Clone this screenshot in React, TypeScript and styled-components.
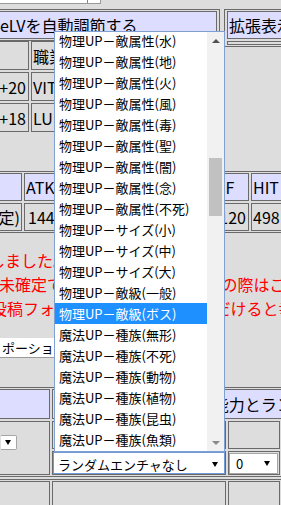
import styled, { createGlobalStyle } from "styled-components";

const HEAD = "#ddddff";
const BODY = "#dddddd";
const LINE = "#6a6a6a";

const GlobalStyle = createGlobalStyle`
  html, body {
    margin: 0;
    padding: 0;
    background: ${BODY};
  }
  body {
    font-family: "Noto Sans CJK JP", "Noto Sans", sans-serif;
    font-size: 16px;
    color: #000;
  }
`;

const OPTIONS = [
  "物理UP－敵属性(水)",
  "物理UP－敵属性(地)",
  "物理UP－敵属性(火)",
  "物理UP－敵属性(風)",
  "物理UP－敵属性(毒)",
  "物理UP－敵属性(聖)",
  "物理UP－敵属性(闇)",
  "物理UP－敵属性(念)",
  "物理UP－敵属性(不死)",
  "物理UP－サイズ(小)",
  "物理UP－サイズ(中)",
  "物理UP－サイズ(大)",
  "物理UP－敵級(一般)",
  "物理UP－敵級(ボス)",
  "魔法UP－種族(無形)",
  "魔法UP－種族(不死)",
  "魔法UP－種族(動物)",
  "魔法UP－種族(植物)",
  "魔法UP－種族(昆虫)",
  "魔法UP－種族(魚類)",
];
const SELECTED = "物理UP－敵級(ボス)";

// scroll state of the open list
const ITEM_H = 21;
const TOTAL_ITEMS = 134;
const VIEW_H = 419;
const SCROLL_TOP = 800;
const TRACK_H = VIEW_H - 34;

const App = () => {
  const full = TOTAL_ITEMS * ITEM_H;
  const thumbH = (VIEW_H / full) * TRACK_H;
  const thumbTop = (SCROLL_TOP / full) * TRACK_H;

  return (
    <Page>
      <GlobalStyle />
      <TopInput>
        <Caret />
      </TopInput>

      <Band>
        <LeftStack>
          <Frame $flush $cols="217px" $rows="28px">
            <Cell $head $edge $pad={0}>eLVを自動調節する</Cell>
          </Frame>
          <StatGrid>
            <Cell $edge />
            <Cell>職業</Cell>
            <Cell $edge $end $pad={2}>+20</Cell>
            <Cell>VIT</Cell>
            <Cell $edge $end $pad={2}>+18</Cell>
            <Cell>LUK</Cell>
          </StatGrid>
        </LeftStack>
        <Frame $cols="120px" $rows="28px 4px">
          <Cell $head>拡張表示</Cell>
          <Cell />
        </Frame>
      </Band>

      <Frame $flush $cols="22px 60px 56px 57px 46px 60px" $rows="28px 28px" style={{ marginTop: 39 }}>
        <Cell $head $edge />
        <Cell $head>ATK</Cell>
        <Cell $head>MATK</Cell>
        <Cell $head>MDEF</Cell>
        <Cell $head>DEF</Cell>
        <Cell $head>HIT</Cell>
        <Cell $edge $end $pad={1}>(固定)</Cell>
        <Cell $pad={3}>144</Cell>
        <Cell>150</Cell>
        <Cell>32</Cell>
        <Cell $end $pad={2}>120</Cell>
        <Cell>498</Cell>
      </Frame>

      <Notice>
        <RedLine $indent={-11}>しました。</RedLine>
        <RedLine $indent={-1}>未確定です。バグの報告や要望の際はご連絡ください。</RedLine>
        <RedLine $indent={-9}>投稿フォームから、ご連絡いただけると幸いです。</RedLine>
      </Notice>

      <Potion>ポーション</Potion>

      <EnchantFrame $flush $cols="50px 174px 52px 60px" $rows="30px 28px 24px">
        <Cell $head $edge />
        <Cell $head $pad={0} $span>スロットエンチャント能力とランダムオプション</Cell>
        <SideCell $edge>
          <MiniSelect>
            <Arrow />
          </MiniSelect>
        </SideCell>
        <Cell />
        <Cell />
        <Cell />
        <Cell $pad={0}>
          <EnchantSelect>
            <span>ランダムエンチャなし</span>
            <Arrow />
          </EnchantSelect>
        </Cell>
        <Cell $pad={0}>
          <CountSelect>
            <span>0</span>
            <Arrow />
          </CountSelect>
        </Cell>
        <Cell />
      </EnchantFrame>

      <Frame $flush $cols="50px 174px 52px 60px" $rows="30px" style={{ marginTop: 2 }}>
        <Cell $edge />
        <Cell />
        <Cell />
        <Cell />
      </Frame>

      <Popup>
        <OptionList>
          <div style={{ marginTop: -(SCROLL_TOP % ITEM_H) }}>
            {OPTIONS.map((o) => (
              <Option key={o} $selected={o === SELECTED}>
                {o}
              </Option>
            ))}
          </div>
        </OptionList>
        <Scrollbar>
          <ScrollButton>
            <StepArrow $up />
          </ScrollButton>
          <Track>
            <Thumb style={{ marginTop: thumbTop, height: thumbH }} />
          </Track>
          <ScrollButton>
            <StepArrow />
          </ScrollButton>
        </Scrollbar>
      </Popup>
    </Page>
  );
};

const Page = styled.div`
  position: relative;
  width: 281px;
  height: 505px;
  overflow: hidden;
`;

const TopInput = styled.div`
  box-sizing: border-box;
  width: 101px;
  height: 4px;
  padding-left: 87px;
  background: #fff;
  border-right: 1px solid #9a9a9a;
  border-bottom: 1px solid #9a9a9a;
`;

const Caret = styled.span`
  display: block;
  width: 1px;
  height: 3px;
  background: #e06060;
`;

const Band = styled.div`
  display: flex;
  align-items: flex-start;
  gap: 4px;
  width: max-content;
  margin-top: 5px;
`;

const LeftStack = styled.div`
  display: flex;
  flex-direction: column;
`;

const Frame = styled.div<{ $cols: string; $rows: string; $flush?: boolean }>`
  display: grid;
  width: max-content;
  grid-template-columns: ${(p) => p.$cols};
  grid-template-rows: ${(p) => p.$rows};
  gap: 2px;
  border: 1px solid ${LINE};
  border-left-width: ${(p) => (p.$flush ? 0 : 1)}px;
  padding: 1px 2px 1px ${(p) => (p.$flush ? 0 : 2)}px;
`;

const EnchantFrame = styled(Frame)`
  margin-top: 29px;
`;

const StatGrid = styled.div`
  display: grid;
  grid-template-columns: 29px 100px;
  grid-auto-rows: 29px;
  gap: 2px;
`;

const Cell = styled.div<{ $head?: boolean; $edge?: boolean; $end?: boolean; $pad?: number; $span?: boolean }>`
  box-sizing: border-box;
  min-width: 0;
  display: flex;
  align-items: center;
  justify-content: ${(p) => (p.$end ? "flex-end" : "flex-start")};
  overflow: hidden;
  white-space: nowrap;
  padding: 0 ${(p) => p.$pad ?? 1}px;
  border: 1px solid ${LINE};
  border-left-width: ${(p) => (p.$edge ? 0 : 1)}px;
  background: ${(p) => (p.$head ? HEAD : BODY)};
  line-height: 1;
  grid-column: ${(p) => (p.$span ? "2 / -1" : "auto")};
`;

const SideCell = styled(Cell)`
  grid-row: span 2;
  align-items: flex-start;
  padding-top: 13px;
`;

const Notice = styled.div`
  margin-top: 15px;
  color: #ff0000;
  font-size: 16px;
  line-height: 24px;
`;

const RedLine = styled.div<{ $indent: number }>`
  white-space: nowrap;
  text-indent: ${(p) => p.$indent}px;
`;

const Potion = styled.div`
  box-sizing: border-box;
  width: 140px;
  height: 20px;
  margin-top: 18px;
  padding-left: 2px;
  background: #fff;
  border-bottom: 1px solid #9a9a9a;
  font-size: 13px;
  line-height: 19px;
  white-space: nowrap;
`;

const Arrow = styled.span`
  width: 0;
  height: 0;
  border-left: 3px solid transparent;
  border-right: 3px solid transparent;
  border-top: 5px solid #000;
`;

const MiniSelect = styled.div`
  box-sizing: border-box;
  width: 16px;
  height: 15px;
  display: flex;
  align-items: center;
  padding-left: 4px;
  background: #fff;
  border: 1px solid #a5a5a5;
  border-left: 0;
  border-radius: 0 2px 2px 0;
`;

const EnchantSelect = styled.div`
  box-sizing: border-box;
  width: 100%;
  height: 100%;
  display: flex;
  align-items: center;
  justify-content: space-between;
  padding: 2px 6px 0 4px;
  background: #fff;
  border: 1px solid #6f9ad6;
  font-size: 13px;
`;

const CountSelect = styled.div`
  box-sizing: border-box;
  width: 49px;
  height: 21px;
  display: flex;
  align-items: center;
  justify-content: space-between;
  padding: 0 7px 0 6px;
  background: #fff;
  border: 1px solid #a5a5a5;
  font-size: 13px;
`;

const Popup = styled.div`
  position: absolute;
  left: 54px;
  top: 31px;
  z-index: 2;
  box-sizing: border-box;
  width: 171px;
  height: 421px;
  display: flex;
  background: #fff;
  border: 1px solid #7ea0d2;
`;

const OptionList = styled.div`
  flex: 1;
  overflow: hidden;
`;

const Option = styled.div<{ $selected?: boolean }>`
  height: 21px;
  padding-left: 4px;
  font-size: 13px;
  line-height: 21px;
  white-space: nowrap;
  background: ${(p) => (p.$selected ? "#1e90ff" : "transparent")};
  color: ${(p) => (p.$selected ? "#fff" : "#000")};
`;

const Scrollbar = styled.div`
  width: 17px;
  display: flex;
  flex-direction: column;
  background: #f1f1f1;
`;

const ScrollButton = styled.div`
  height: 17px;
  flex-shrink: 0;
  display: flex;
  align-items: center;
  justify-content: center;
`;

const StepArrow = styled.span<{ $up?: boolean }>`
  width: 0;
  height: 0;
  border-left: 4px solid transparent;
  border-right: 4px solid transparent;
  ${(p) => (p.$up ? "border-bottom: 4px solid #505050;" : "border-top: 4px solid #8a8a8a;")}
`;

const Track = styled.div`
  flex: 1;
  overflow: hidden;
`;

const Thumb = styled.div`
  width: 13px;
  margin-left: 2px;
  background: #c1c1c1;
`;

export default App;
